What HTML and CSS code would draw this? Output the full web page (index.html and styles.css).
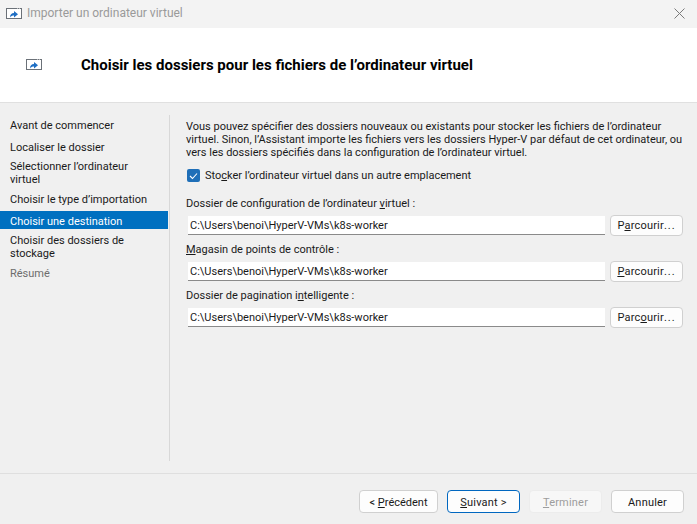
FILE: index.html
```html
<!DOCTYPE html>
<html lang="fr">
<head>
  <meta charset="UTF-8" />
  <title>Importer un ordinateur virtuel</title>
  <link rel="stylesheet" href="styles.css">
</head>
<body>

<div class="window">
  <div class="titlebar">
    <div class="titlebar-left">
      <svg class="vm-icon" width="16" height="11" viewBox="0 0 16 11">
        <rect x="0.5" y="0.5" width="15" height="10" fill="#fff" stroke="#6b7178"/>
        <path d="M11 1h1M13 1h1" stroke="#fff"/>
        <path d="M4 9.500C4 6.500 5.500 5 8 5V3l4 3.200-4 3.200V7.500c-1.500 0-3 .4-4 2z" fill="#1f6fc4"/>
      </svg>
      <span class="title-text">Importer un ordinateur virtuel</span>
    </div>
    <svg class="close-icon" width="11" height="11" viewBox="0 0 11 11">
      <path d="M0.500 0.500l10 10M10.500 0.500l-10 10" stroke="#7a7a7a" fill="none"/>
    </svg>
  </div>

  <div class="header">
    <svg class="vm-icon" width="16" height="11" viewBox="0 0 16 11">
      <rect x="0.5" y="0.5" width="15" height="10" fill="#fff" stroke="#6b7178"/>
      <path d="M11 1h1M13 1h1" stroke="#fff"/>
      <path d="M4 9.500C4 6.500 5.500 5 8 5V3l4 3.200-4 3.200V7.500c-1.500 0-3 .4-4 2z" fill="#1f6fc4"/>
    </svg>
    <h1>Choisir les dossiers pour les fichiers de l’ordinateur virtuel</h1>
  </div>

  <div class="main">
    <ul class="steps">
      <li class="step first">Avant de commencer</li>
      <li class="step tight">Localiser le dossier</li>
      <li class="step">Sélectionner l’ordinateur virtuel</li>
      <li class="step">Choisir le type d’importation</li>
      <li class="step active">Choisir une destination</li>
      <li class="step">Choisir des dossiers de stockage</li>
      <li class="step muted">Résumé</li>
    </ul>

    <div class="content">
      <p class="intro">Vous pouvez spécifier des dossiers nouveaux ou existants pour stocker les fichiers de l’ordinateur virtuel. Sinon, l’Assistant importe les fichiers vers les dossiers Hyper-V par défaut de cet ordinateur, ou vers les dossiers spécifiés dans la configuration de l’ordinateur virtuel.</p>

      <div class="check-row">
        <span class="checkbox">
          <svg width="9" height="8" viewBox="0 0 9 8"><path d="M1 4l2.500 2.500L8 1.500" stroke="#fff" stroke-width="1.100" fill="none"/></svg>
        </span>
        <span>Sto<u>c</u>ker l’ordinateur virtuel dans un autre emplacement</span>
      </div>

      <div class="field">
        <label>Dossier de configuration de l’ordinateur <u>v</u>irtuel :</label>
        <div class="field-row">
          <div class="input">C:\Users\benoi\HyperV-VMs\k8s-worker</div>
          <button class="btn browse">P<u>a</u>rcourir<span class="dots">...</span></button>
        </div>
      </div>

      <div class="field">
        <label><u>M</u>agasin de points de contrôle :</label>
        <div class="field-row">
          <div class="input">C:\Users\benoi\HyperV-VMs\k8s-worker</div>
          <button class="btn browse"><u>P</u>arcourir<span class="dots">...</span></button>
        </div>
      </div>

      <div class="field">
        <label>Dossier de pagination i<u>n</u>telligente :</label>
        <div class="field-row">
          <div class="input">C:\Users\benoi\HyperV-VMs\k8s-worker</div>
          <button class="btn browse">Parc<u>o</u>urir<span class="dots">...</span></button>
        </div>
      </div>
    </div>
  </div>

  <div class="footer">
    <button class="btn prev">&lt; <u>P</u>récédent</button>
    <button class="btn next"><u>S</u>uivant &gt;</button>
    <button class="btn finish" disabled><u>T</u>erminer</button>
    <button class="btn cancel">Annuler</button>
  </div>
</div>

</body>
</html>
```

FILE: styles.css
```css
* {
  margin: 0;
  padding: 0;
  box-sizing: border-box;
}

html, body {
  height: 100%;
  overflow: hidden;
}

body {
  font-family: Roboto, sans-serif;
  font-size: 11px;
  line-height: 13px;
  color: #1a1a1a;
  background: #f0f0f0;
}

.window {
  height: 524px;
  display: flex;
  flex-direction: column;
}

.titlebar {
  height: 28px;
  flex: none;
  background: #f3f3f3;
  display: flex;
  justify-content: space-between;
  align-items: center;
  padding: 0 12px 2px 6px;
}

.titlebar-left {
  display: flex;
  align-items: center;
  gap: 5px;
}

.title-text {
  font-size: 12px;
  color: #9a9a9a;
}

.vm-icon {
  display: block;
  flex: none;
}

.header {
  height: 75px;
  flex: none;
  background: #fff;
  border-bottom: 1px solid #e0e0e0;
  display: flex;
  align-items: center;
  padding: 0 0 2px 26px;
}

.header h1 {
  margin-left: 39px;
  padding-top: 2px;
  font-size: 15px;
  font-weight: 700;
  color: #000;
}

.main {
  flex: 1;
  display: flex;
  padding-top: 12px;
  min-height: 0;
}

.steps {
  width: 170px;
  height: 346px;
  flex: none;
  list-style: none;
  border-right: 1px solid #d8d8d8;
  padding-right: 1px;
}

.step {
  padding: 3px 10px 4px;
}

.step.first {
  padding-top: 4px;
  padding-bottom: 6px;
}

.step.tight {
  padding-bottom: 3px;
}

.step.active {
  background: #0070c0;
  color: #fff;
  margin: 1px 0 2px;
  padding: 4px 10px 1px;
}

.step.muted {
  color: #6d6d6d;
}

.content {
  flex: 1;
  padding: 5px 14px 0 16px;
}

.intro {
  margin-right: -6px;
}

.check-row {
  display: flex;
  align-items: center;
  gap: 5px;
  height: 13px;
  margin-top: 10px;
  padding-left: 1px;
}

.checkbox {
  width: 13px;
  height: 13px;
  border-radius: 2px;
  background: #1f6fb8;
  display: flex;
  align-items: center;
  justify-content: center;
}

.field {
  margin-top: 6px;
}

.check-row + .field {
  margin-top: 14px;
}

.field label {
  display: block;
  line-height: 14px;
  padding-top: 1px;
}

.field-row {
  display: flex;
  gap: 5px;
  margin-top: 4px;
}

.input {
  flex: 1;
  height: 19px;
  margin-top: 1px;
  margin-left: 2px;
  background: #fff;
  border-bottom: 1px solid #8a8a8a;
  padding: 1px 2px 0;
  line-height: 18px;
}

.btn {
  font-family: inherit;
  font-size: 11px;
  color: #1a1a1a;
  background: #fdfdfd;
  border: 1px solid #d0d0d0;
  border-radius: 4px;
  letter-spacing: 0.2px;
}

.dots {
  letter-spacing: 1px;
}

.browse {
  width: 73px;
  height: 21px;
}

.footer {
  height: 51px;
  flex: none;
  border-top: 1px solid #dfdfdf;
  display: flex;
  justify-content: flex-end;
  gap: 9px;
  padding: 16px 13px 0 0;
}

.footer .btn {
  height: 23px;
  width: 73px;
  padding-top: 2px;
}

.footer .prev {
  width: 79px;
  letter-spacing: 0;
}

.footer .next {
  border-color: #0067c0;
}

.footer .finish {
  color: #9d9d9d;
  background: #f7f7f7;
  border-color: #ececec;
}
```
